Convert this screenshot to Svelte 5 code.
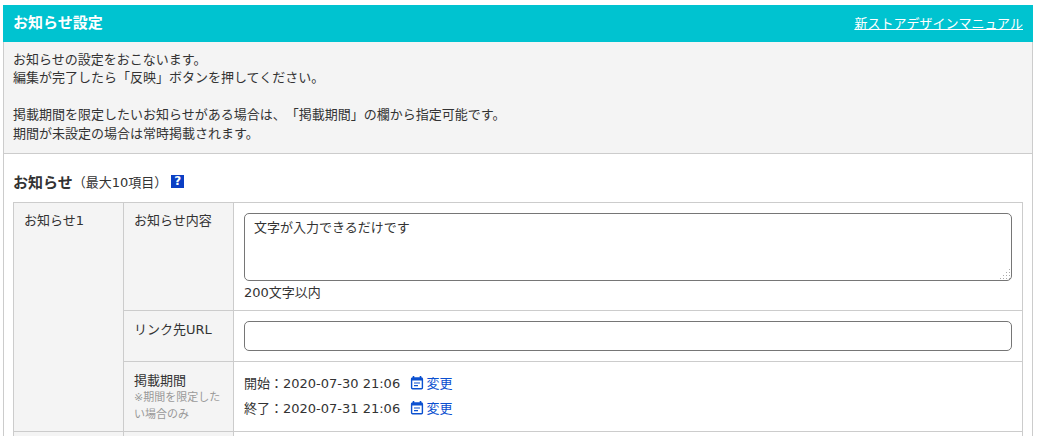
<script>
  let notice = $state('文字が入力できるだけです');
  let url = $state('');

  const periods = [
    { label: '開始', value: '2020-07-30 21:06' },
    { label: '終了', value: '2020-07-31 21:06' }
  ];
</script>

<div class="page">
  <header class="title-bar">
    <h1>お知らせ設定</h1>
    <a href="#manual">新ストアデザインマニュアル</a>
  </header>

  <div class="description">
    お知らせの設定をおこないます。<br />編集が完了したら「反映」ボタンを押してください。<br /><br />
    掲載期間を限定したいお知らせがある場合は、「掲載期間」の欄から指定可能です。<br />期間が未設定の場合は常時掲載されます。
  </div>

  <section class="content">
    <h2>お知らせ<small>（最大10項目）</small><span class="help">?</span></h2>

    <table>
      <tbody>
        <tr>
          <th class="group" rowspan="3">お知らせ1</th>
          <th>お知らせ内容</th>
          <td class="notice-cell">
            <textarea bind:value={notice}></textarea>
            <div class="limit">200文字以内</div>
          </td>
        </tr>
        <tr>
          <th class="url-head">リンク先URL</th>
          <td class="url-cell"><input type="text" bind:value={url} /></td>
        </tr>
        <tr>
          <th class="period-head">掲載期間<span class="note">※期間を限定したい場合のみ</span></th>
          <td class="period-cell">
            {#each periods as period}
              <div class="period">
                {period.label}：{period.value}
                <a href="#change">
                  <svg width="14" height="14" viewBox="0 0 14 14" aria-hidden="true">
                    <path d="M3.5 0v2.5M10.5 0v2.5" stroke="#0b50d0" stroke-width="1.6" fill="none" />
                    <rect x="1.6" y="2" width="10.8" height="10.8" rx="1" fill="none" stroke="#0b50d0" stroke-width="1.4" />
                    <path d="M2 2h10v2.6H2zM4 6.4h6v1.2H4zM4 9h4v1.2H4z" fill="#0b50d0" />
                  </svg>
                  変更
                </a>
              </div>
            {/each}
          </td>
        </tr>
        <tr class="next">
          <th></th>
          <th></th>
          <td></td>
        </tr>
      </tbody>
    </table>
  </section>
</div>

<style>
  :global(body) {
    margin: 0;
    background: #fff;
    overflow: hidden;
  }

  .page {
    width: 1030px;
    height: 436px;
    margin: 0 0 0 3px;
    padding-top: 5px;
    box-sizing: border-box;
    overflow: hidden;
    color: #333;
    font-family: "DejaVu Sans", "Noto Sans CJK JP", sans-serif;
    font-size: 13px;
    line-height: 18px;
    text-spacing-trim: space-all;
  }

  .title-bar {
    display: flex;
    justify-content: space-between;
    align-items: center;
    height: 37px;
    padding: 0 10px 2px;
    box-sizing: border-box;
    background: #00c3d0;
    color: #fff;
  }

  .title-bar h1 {
    margin: 0;
    font-size: 15px;
    font-weight: 700;
  }

  .title-bar a {
    margin-top: 2px;
    color: #fff;
    font-size: 13px;
  }

  .description {
    height: 112px;
    box-sizing: border-box;
    padding: 8.5px 9px 0;
    background: #f4f4f4;
    border-left: 1px solid #ccc;
    border-right: 1px solid #ccc;
    border-bottom: 1px solid #ccc;
    line-height: 18.6px;
  }

  .content {
    padding: 18px 9px 0;
    border-left: 1px solid #ccc;
    border-right: 1px solid #ccc;
  }

  h2 {
    display: flex;
    align-items: center;
    height: 22px;
    margin: 0 0 8px;
    font-size: 15px;
    font-weight: 700;
  }

  h2 small {
    font-size: 13px;
    font-weight: 400;
  }

  .help {
    width: 13px;
    height: 13px;
    margin: -3px 0 0 4px;
    background: #0b3fc4;
    color: #fff;
    font-size: 12px;
    line-height: 13px;
    text-align: center;
  }

  table {
    width: 1010px;
    table-layout: fixed;
    border-collapse: collapse;
  }

  th,
  td {
    border: 1px solid #ccc;
    vertical-align: top;
    text-align: left;
    font-weight: 400;
  }

  th {
    width: 89px;
    padding: 9px 10px;
    background: #f4f4f4;
  }

  td {
    width: auto;
    padding: 10px;
  }

  textarea,
  input {
    display: block;
    width: 100%;
    box-sizing: border-box;
    border: 1px solid #767676;
    border-radius: 5px;
    color: #333;
    font: inherit;
    outline: none;
  }

  textarea {
    height: 68px;
    padding: 5px 9px;
  }

  textarea::-webkit-resizer {
    background:
      linear-gradient(to bottom right, #fff 52%, transparent 52%),
      radial-gradient(circle at 1.5px 1.5px, #aaa 1px, transparent 1px) 0 0 / 3px 3px;
  }

  input {
    height: 30px;
    padding: 0 9px;
  }

  .notice-cell {
    padding-bottom: 8px;
  }

  .limit {
    margin-top: 3px;
  }

  .url-head {
    padding-top: 10px;
  }

  .period-head {
    padding: 10px 10px 8px;
    line-height: 17px;
  }

  .note {
    display: block;
    color: #999;
    font-size: 11px;
  }

  .period-cell {
    padding: 9px 10px 0;
  }

  .period {
    height: 25px;
    line-height: 25px;
  }

  .period a {
    margin-left: 6px;
    color: #0b50d0;
    text-decoration: none;
  }

  .period svg {
    margin-right: -2px;
    vertical-align: -2px;
  }

  .next td,
  .next th {
    height: 20px;
  }
</style>
